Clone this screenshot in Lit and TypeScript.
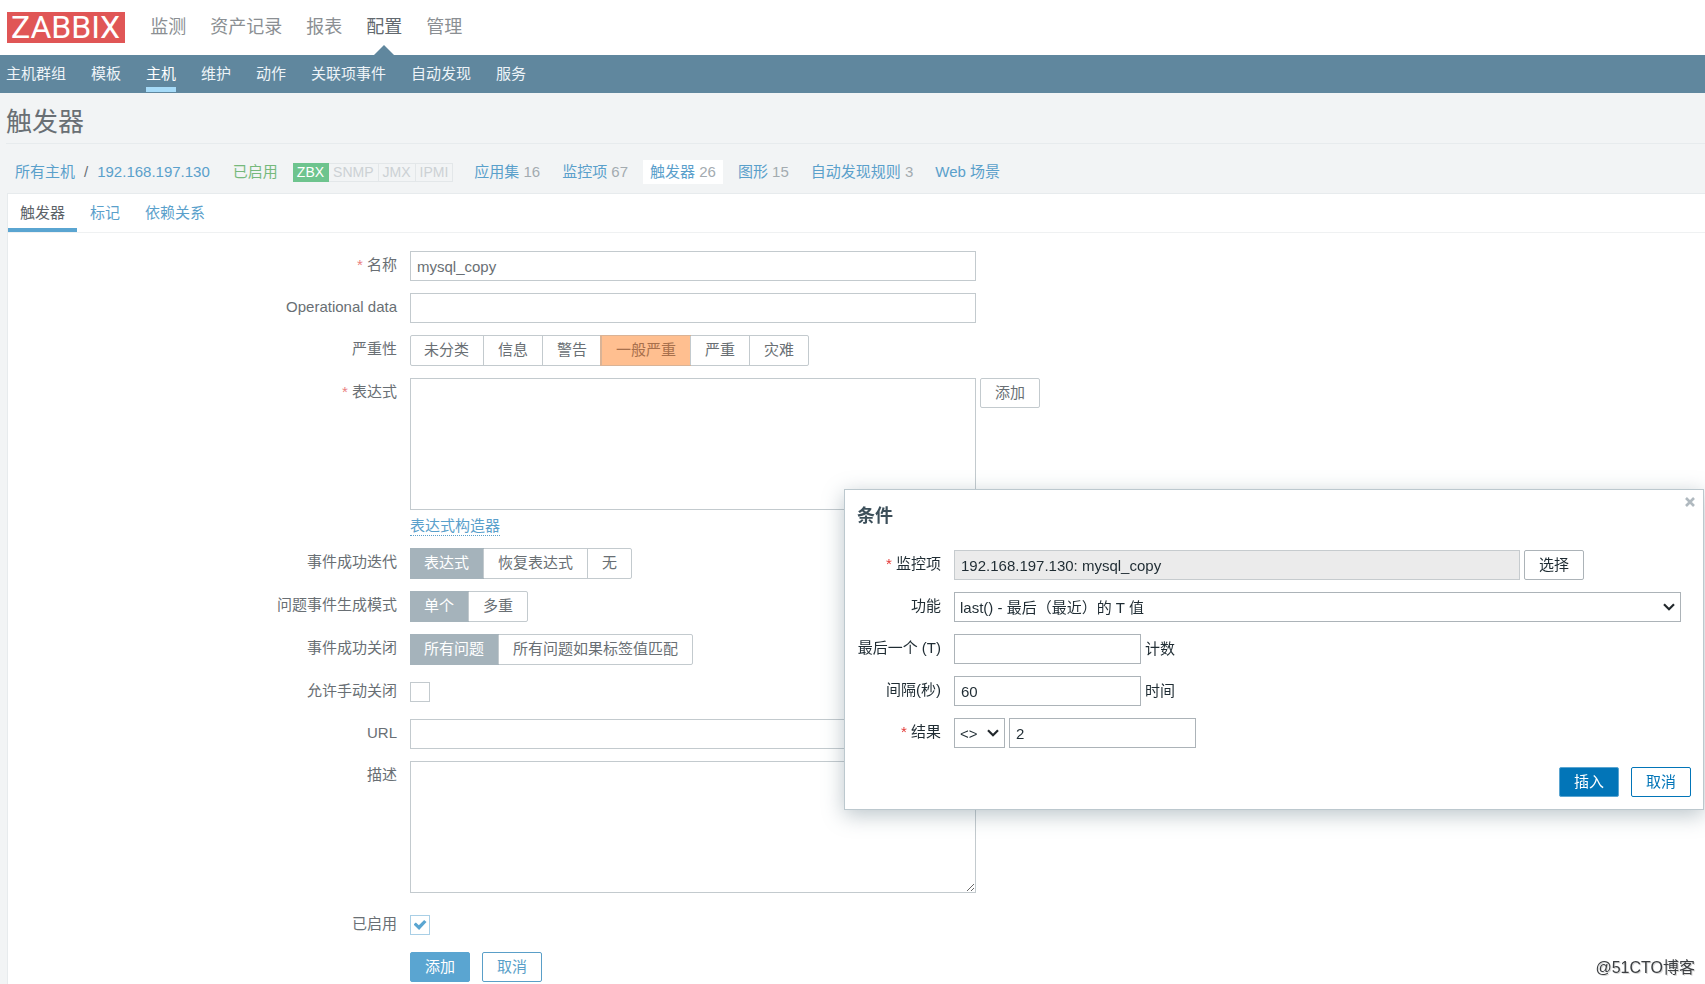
import { LitElement, html, css, nothing, type TemplateResult } from "lit";
import { customElement, state } from "lit/decorators.js";
import { classMap } from "lit/directives/class-map.js";

const MAIN_MENU = ["监测", "资产记录", "报表", "配置", "管理"];
const SUB_MENU = ["主机群组", "模板", "主机", "维护", "动作", "关联项事件", "自动发现", "服务"];
const HOST_LINKS: { label: string; count?: number; on?: boolean }[] = [
  { label: "应用集", count: 16 },
  { label: "监控项", count: 67 },
  { label: "触发器", count: 26, on: true },
  { label: "图形", count: 15 },
  { label: "自动发现规则", count: 3 },
  { label: "Web 场景" },
];

@customElement("app-root")
export class AppRoot extends LitElement {
  @state() private dialogOpen = true;

  static styles = css`
    :host {
      display: block;
      min-height: 100vh;
      font-family: "Liberation Sans", "Noto Sans CJK SC", sans-serif;
      font-size: 15px;
      line-height: 20px;
      color: #696f74;
      background: #f2f4f5;
    }
    * { box-sizing: border-box; }
    .page { display: flex; flex-direction: column; min-height: 100vh; }
    a { color: #5aa0cb; text-decoration: none; }
    button, input, textarea, select { font: inherit; color: inherit; margin: 0; }

    .top {
      display: flex;
      align-items: center;
      gap: 25px;
      height: 55px;
      padding: 0 7px;
      background: #fff;
    }
    .logo {
      padding: 0 5px 0 4px;
      font: 32px/31px Roboto, sans-serif;
      color: #fff;
      background: #e05656;
    }
    .main-menu { display: flex; gap: 24px; align-self: stretch; font-size: 18px; }
    .main-menu a {
      display: flex;
      align-items: center;
      position: relative;
      padding-bottom: 2px;
      color: #8b8f93;
    }
    .main-menu a.on { color: #62696f; }
    .main-menu a.on::after {
      content: "";
      position: absolute;
      bottom: 0;
      left: 50%;
      margin-left: -10px;
      border: 10px solid transparent;
      border-top: 0;
      border-bottom-color: #60879e;
    }
    .sub-menu {
      display: flex;
      gap: 25px;
      height: 38px;
      padding: 0 6px;
      background: #60879e;
    }
    .sub-menu a {
      padding-top: 9px;
      height: 37px;
      color: #eef4f8;
      border-bottom: 5px solid transparent;
    }
    .sub-menu a.on { color: #fff; border-bottom-color: #a6dbf8; }

    h1 {
      margin: 0 0 0 6px;
      height: 51px;
      padding-top: 11px;
      font-size: 26px;
      line-height: 36px;
      font-weight: 400;
      border-bottom: 1px solid #e7ebed;
    }
    .crumbs { display: flex; align-items: center; gap: 8px; height: 49px; padding: 7px 8px 0; }
    .crumbs > * { padding: 2px 7px; }
    .crumbs .path { display: flex; gap: 9px; padding-right: 8px; }
    .crumbs .ok { color: #76b97c; }
    .crumbs .on { background: #fff; }
    .count { color: #a3abb0; }
    .badges { display: flex; padding: 0 6px 0 0; }
    .badges span {
      padding: 0 4px;
      height: 19px;
      line-height: 17px;
      font-size: 14px;
      color: #ccd1d4;
      border: 1px solid #e3e7e9;
      border-left: 0;
    }
    .badges span.zbx { color: #fff; background: #6ec48e; border-color: #6ec48e; }

    .panel {
      flex: 1;
      margin-left: 7px;
      background: #fff;
      border: solid #e7ebed;
      border-width: 1px 0 0 1px;
    }
    .tabs { display: flex; gap: 1px; height: 39px; border-bottom: 1px solid #eff1f2; }
    .tabs a { padding: 9px 12px 0; }
    .tabs a.on { color: #5c6368; border-bottom: 4px solid #5aa5d1; }

    .form {
      display: grid;
      grid-template-columns: 389px minmax(0, 1fr);
      column-gap: 13px;
      row-gap: 12px;
      padding: 18px 0 2px;
    }
    .label { text-align: right; padding-top: 4px; }
    .req::before { content: "* "; color: #ea8080; }
    .line { display: flex; align-items: flex-start; gap: 4px; }
    .box {
      display: block;
      width: 566px;
      height: 30px;
      padding: 0 6px;
      background: #fff;
      border: 1px solid #c3cace;
      border-radius: 0;
      outline: 0;
    }
    textarea.box { height: 132px; }
    textarea.fixed { resize: none; }
    .build { display: block; width: max-content; margin-top: 6px; line-height: 19px; border-bottom: 1px dotted #5aa0cb; }
    .desc { padding-bottom: 5px; }
    .seg {
      display: flex;
      width: max-content;
      height: 31px;
      margin: 0;
      padding: 0;
      border: 1px solid #c3cace;
      border-radius: 2px;
    }
    .seg label { padding: 4px 14px 0; border-left: 1px solid #c3cace; }
    .seg label:first-of-type { padding-left: 13px; border-left: 0; }
    .seg input { position: absolute; opacity: 0; pointer-events: none; }
    .seg label:has(:checked) { color: #fff; background: #a5b3bb; box-shadow: 0 0 0 1px #a5b3bb; border-color: #a5b3bb; }
    .seg.severity label:has(:checked) { color: #a8704c; background: #ffbf90; box-shadow: 0 0 0 1px #d9b396; border-color: #d9b396; }
    .tick { display: flex; align-items: center; height: 30px; }
    .tick input {
      appearance: none;
      display: grid;
      place-items: center;
      width: 20px;
      height: 20px;
      background: #fff;
      border: 1px solid #c3cace;
    }
    .tick input:checked { border-color: #a9cfe6; }
    .tick input:checked::before {
      content: "";
      width: 13px;
      height: 10px;
      background: #5aa5d1;
      clip-path: polygon(0 45%, 18% 24%, 41% 52%, 82% 0, 100% 20%, 43% 100%);
    }
    .btn {
      height: 30px;
      padding: 0 14px;
      white-space: nowrap;
      background: #fff;
      border: 1px solid #c3cace;
      border-radius: 2px;
      line-height: 20px;
    }
    .actions { display: flex; gap: 12px; }
    .blue { color: #5a9fc8; border-color: #5a9fc8; }
    .fill { color: #fff; background: #5aa5d1; border-color: #5aa5d1; }

    .dialog {
      position: fixed;
      top: 489px;
      right: 1px;
      width: 860px;
      padding: 14px 12px 12px;
      color: #1f2c33;
      background: #fff;
      border: 1px solid #bcc8ce;
      box-shadow: 0 5px 20px rgba(84, 110, 122, 0.4);
    }
    .dialog h2 { margin: 0; font-size: 18px; line-height: 24px; color: #3c4f5a; }
    .close {
      position: absolute;
      top: 7px;
      right: 8px;
      display: flex;
      padding: 0;
      background: none;
      border: 0;
      color: #b0b9bf;
    }
    .fields {
      display: grid;
      grid-template-columns: 84px minmax(0, 1fr);
      gap: 12px 13px;
      padding: 22px 10px 19px 0;
    }
    .fields .req::before { color: #e33734; }
    .fields .box, .fields .btn { border-color: #acb3b8; }
    .fields .short { width: 187px; }
    .pick { display: grid; align-items: center; }
    .pick select, .pick svg { grid-area: 1 / 1; }
    .pick select { appearance: none; width: 100%; padding: 1px 5px 0; }
    .pick svg { justify-self: end; margin-right: 6px; pointer-events: none; }
    .pick.op { width: 51px; }
    .fields .box[readonly] { background: #ebebeb; border-color: #c6cbce; }
    .unit { padding-top: 5px; }
    .dialog .actions { justify-content: flex-end; }
    .dialog .blue { color: #0275b8; border-color: #0275b8; }
    .dialog .fill { color: #fff; background: #0275b8; }

    .mark {
      position: fixed;
      right: 10px;
      bottom: 6px;
      font-size: 16px;
      color: #3c3f42;
      text-shadow: 1px 1px 0 #d8d8d8;
    }
  `;

  private segment(name: string, options: string[], checked: number, extra = "") {
    return html`<fieldset class="seg ${extra}" aria-label=${name}>
      ${options.map(
        (o, i) => html`<label><input type="radio" name=${name} .checked=${i === checked} />${o}</label>`
      )}
    </fieldset>`;
  }

  private pick(select: TemplateResult, extra = "") {
    return html`<div class="pick ${extra}">
      ${select}
      <svg width="12" height="8" viewBox="0 0 12 8" fill="none" stroke="#22282c" stroke-width="2.2">
        <path d="M1 1.2L6 6.2L11 1.2" />
      </svg>
    </div>`;
  }

  private dialog() {
    return html`<section class="dialog" role="dialog" aria-labelledby="dlg-title">
      <button class="close" aria-label="关闭" @click=${() => (this.dialogOpen = false)}>
        <svg width="10" height="10" viewBox="0 0 10 10" stroke="currentColor" stroke-width="2.6">
          <path d="M1 1L9 9M9 1L1 9" />
        </svg>
      </button>
      <h2 id="dlg-title">条件</h2>
      <div class="fields">
        <label class="label req" for="item">监控项</label>
        <div class="line">
          <input id="item" class="box" readonly value="192.168.197.130: mysql_copy" />
          <button class="btn">选择</button>
        </div>
        <label class="label" for="func">功能</label>
        ${this.pick(html`<select id="func" class="box"><option>last() - 最后（最近）的 T 值</option></select>`)}
        <label class="label" for="last">最后一个 (T)</label>
        <div class="line"><input id="last" class="box short" /><span class="unit">计数</span></div>
        <label class="label" for="shift">间隔(秒)</label>
        <div class="line"><input id="shift" class="box short" value="60" /><span class="unit">时间</span></div>
        <label class="label req" for="result">结果</label>
        <div class="line">
          ${this.pick(html`<select class="box" aria-label="运算符"><option>&lt;&gt;</option></select>`, "op")}
          <input id="result" class="box short" value="2" />
        </div>
      </div>
      <div class="actions">
        <button class="btn fill">插入</button>
        <button class="btn blue" @click=${() => (this.dialogOpen = false)}>取消</button>
      </div>
    </section>`;
  }

  render() {
    return html`<div class="page">
      <header class="top">
        <a class="logo" href="#">ZABBIX</a>
        <nav class="main-menu">
          ${MAIN_MENU.map((m) => html`<a href="#" class=${classMap({ on: m === "配置" })}>${m}</a>`)}
        </nav>
      </header>
      <nav class="sub-menu">
        ${SUB_MENU.map((m) => html`<a href="#" class=${classMap({ on: m === "主机" })}>${m}</a>`)}
      </nav>
      <h1>触发器</h1>
      <div class="crumbs">
        <div class="path"><a href="#">所有主机</a><span>/</span><a href="#">192.168.197.130</a></div>
        <span class="ok">已启用</span>
        <div class="badges"><span class="zbx">ZBX</span><span>SNMP</span><span>JMX</span><span>IPMI</span></div>
        ${HOST_LINKS.map(
          (l) => html`<div class=${classMap({ on: !!l.on })}>
            <a href="#">${l.label}</a>${l.count ? html` <span class="count">${l.count}</span>` : nothing}
          </div>`
        )}
      </div>
      <main class="panel">
        <nav class="tabs"><a class="on" href="#">触发器</a><a href="#">标记</a><a href="#">依赖关系</a></nav>
        <form class="form" @submit=${(e: Event) => e.preventDefault()}>
          <label class="label req" for="name">名称</label>
          <input id="name" class="box" value="mysql_copy" />
          <label class="label" for="opdata">Operational data</label>
          <input id="opdata" class="box" />
          <span class="label">严重性</span>
          ${this.segment("严重性", ["未分类", "信息", "警告", "一般严重", "严重", "灾难"], 3, "severity")}
          <label class="label req" for="expr">表达式</label>
          <div>
            <div class="line">
              <textarea id="expr" class="box fixed"></textarea>
              <button class="btn" type="button" @click=${() => (this.dialogOpen = true)}>添加</button>
            </div>
            <a class="build" href="#">表达式构造器</a>
          </div>
          <span class="label">事件成功迭代</span>
          ${this.segment("事件成功迭代", ["表达式", "恢复表达式", "无"], 0)}
          <span class="label">问题事件生成模式</span>
          ${this.segment("问题事件生成模式", ["单个", "多重"], 0)}
          <span class="label">事件成功关闭</span>
          ${this.segment("事件成功关闭", ["所有问题", "所有问题如果标签值匹配"], 0)}
          <label class="label" for="manual">允许手动关闭</label>
          <div class="tick"><input id="manual" type="checkbox" /></div>
          <label class="label" for="url">URL</label>
          <input id="url" class="box" />
          <label class="label" for="desc">描述</label>
          <div class="desc"><textarea id="desc" class="box"></textarea></div>
          <label class="label" for="enabled">已启用</label>
          <div class="tick"><input id="enabled" type="checkbox" checked /></div>
          <span></span>
          <div class="actions">
            <button class="btn fill">添加</button>
            <button class="btn blue" type="button">取消</button>
          </div>
        </form>
      </main>
      ${this.dialogOpen ? this.dialog() : nothing}
      <div class="mark">@51CTO博客</div>
    </div>`;
  }
}
